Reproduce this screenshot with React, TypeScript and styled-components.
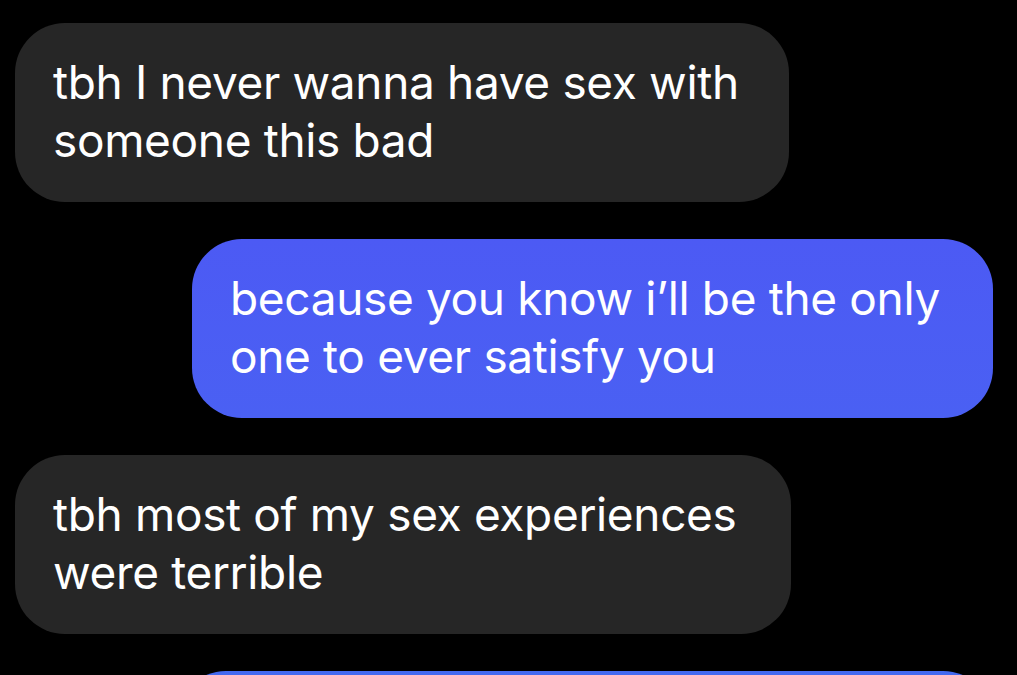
import styled, { createGlobalStyle } from "styled-components";

const GlobalStyle = createGlobalStyle`
  html, body {
    margin: 0;
    padding: 0;
    background: #000;
  }
  body {
    font-family: Inter, "Noto Sans", "Liberation Sans", sans-serif;
  }
`;

const Thread = styled.div`
  height: 675px;
  overflow: hidden;
  display: flex;
  flex-direction: column;
  gap: 37px;
  padding: 23px 24px 0 15px;
  box-sizing: border-box;
  background: #000;
`;

interface IBubble {
  $sent?: boolean;
  $width: number;
  $shade?: string;
}

const Bubble = styled.div<IBubble>`
  box-sizing: border-box;
  flex-shrink: 0;
  width: ${(props) => props.$width}px;
  min-height: 179px;
  align-self: ${(props) => (props.$sent ? "flex-end" : "flex-start")};
  padding: 30px 20px 33px 38px;
  border-radius: 50px;
  background: ${(props) =>
    props.$sent ? props.$shade || "#4c5cf4" : "#262626"};
  color: #fff;
  font-size: 46px;
  line-height: 58px;
  letter-spacing: -0.35px;
`;

const messages = [
  { sent: false, width: 774, text: "tbh I never wanna have sex with someone this bad" },
  {
    sent: true,
    width: 801,
    shade: "linear-gradient(180deg, #4c5af4 0%, #4a60f3 100%)",
    text: "because you know i’ll be the only one to ever satisfy you",
  },
  { sent: false, width: 776, text: "tbh most of my sex experiences were terrible" },
  {
    sent: true,
    width: 817,
    shade: "linear-gradient(180deg, #4369f0 0%, #3f72ef 100%)",
    text: "",
  },
];

const App = () => {
  return (
    <>
      <GlobalStyle />
      <Thread>
        {messages.map((m, i) => (
          <Bubble key={i} $sent={m.sent} $width={m.width} $shade={m.shade}>
            {m.text}
          </Bubble>
        ))}
      </Thread>
    </>
  );
};

export default App;
